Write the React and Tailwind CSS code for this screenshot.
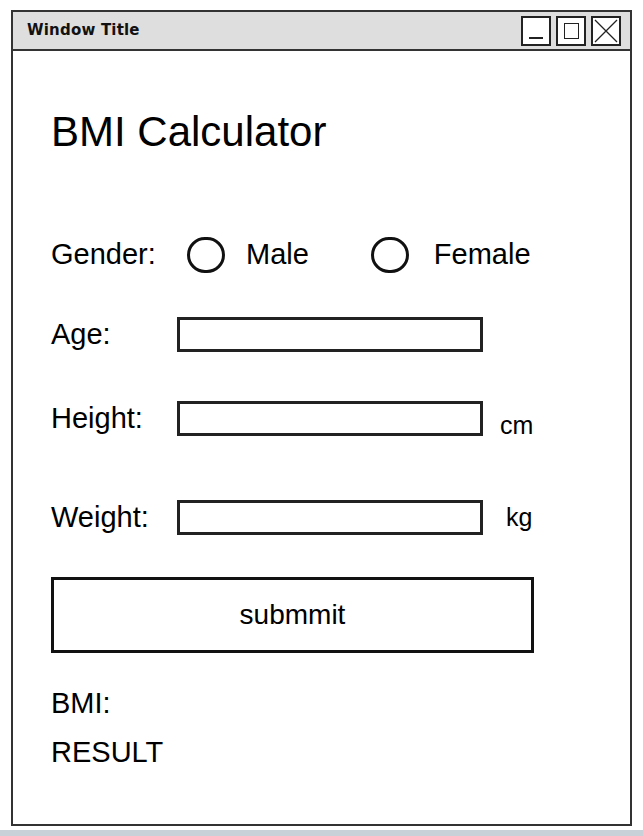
import React from "react";

function Radio({ label, gap = "ml-[21px]", className = "" }) {
  return (
    <div className={"flex items-center " + className}>
      <div className="w-[38px] h-[36px] rounded-full border-[3px] border-[#111]" />
      <span className={gap}>{label}</span>
    </div>
  );
}

function Field({ label, unit, unitClass = "", className = "" }) {
  return (
    <div className={"flex items-center h-[35px] " + className}>
      <span className="w-[126px]">{label}</span>
      <div className="w-[306px] h-[35px] border-[3px] border-[#222] bg-white" />
      {unit && <span className={"text-[25px] leading-[30px] " + unitClass}>{unit}</span>}
    </div>
  );
}

export default function App() {
  return (
    <div className="w-[643px] h-[836px] bg-white flex flex-col" style={{ fontFamily: '"Liberation Sans", Arial, sans-serif' }}>
      <div className="mt-[10px] ml-[11px] w-[621px] h-[816px] border-2 border-[#333] flex flex-col">
        <div className="h-[39px] bg-[#dedede] border-b-2 border-[#333] flex items-center justify-between pl-[14px] pr-[9px]">
          <span className="font-bold text-[#111] text-[15px] tracking-[0.2px]" style={{ fontFamily: '"DejaVu Sans", sans-serif' }}>Window Title</span>
          <div className="flex gap-[5px]">
            <div className="w-[30px] h-[30px] border-2 border-[#222] bg-white flex items-end justify-center pb-[5px]">
              <div className="w-[14px] h-[2px] bg-[#222]" />
            </div>
            <div className="w-[30px] h-[30px] border-2 border-[#222] bg-white flex items-center justify-center">
              <div className="w-[15px] h-[16px] border-[1.5px] border-[#222]" />
            </div>
            <div className="w-[30px] h-[30px] border-2 border-[#222] bg-white flex items-center justify-center">
              <svg width="24" height="24" viewBox="0 0 24 24">
                <path d="M1 1 L23 23 M23 1 L1 23" stroke="#222" strokeWidth="1.3" fill="none" />
              </svg>
            </div>
          </div>
        </div>
        <div className="flex flex-col pl-[38px] text-[29px] text-black">
          <h1 className="mt-[57px] text-[42px] leading-[48px] font-normal">BMI Calculator</h1>
          <div className="mt-[80px] flex items-center h-[38px]">
            <span className="w-[136px]">Gender:</span>
            <Radio label="Male" />
            <Radio label="Female" gap="ml-[25px]" className="ml-[62px]" />
          </div>
          <Field label="Age:" className="mt-[43px]" />
          <Field label="Height:" unit="cm" unitClass="ml-[17px] mt-[12px]" className="mt-[49px]" />
          <Field label="Weight:" unit="kg" unitClass="ml-[23px] -mt-[2px]" className="mt-[64px]" />
          <div className="mt-[42px] w-[483px] h-[76px] border-[3px] border-[#111] flex items-center justify-center text-[28px]">
            submmit
          </div>
          <div className="mt-[33px] leading-[34px]">BMI:</div>
          <div className="mt-[15px] leading-[34px]">RESULT</div>
        </div>
      </div>
      <div className="mt-[4px] h-[6px] bg-[#c8d0d8]" />
    </div>
  );
}
